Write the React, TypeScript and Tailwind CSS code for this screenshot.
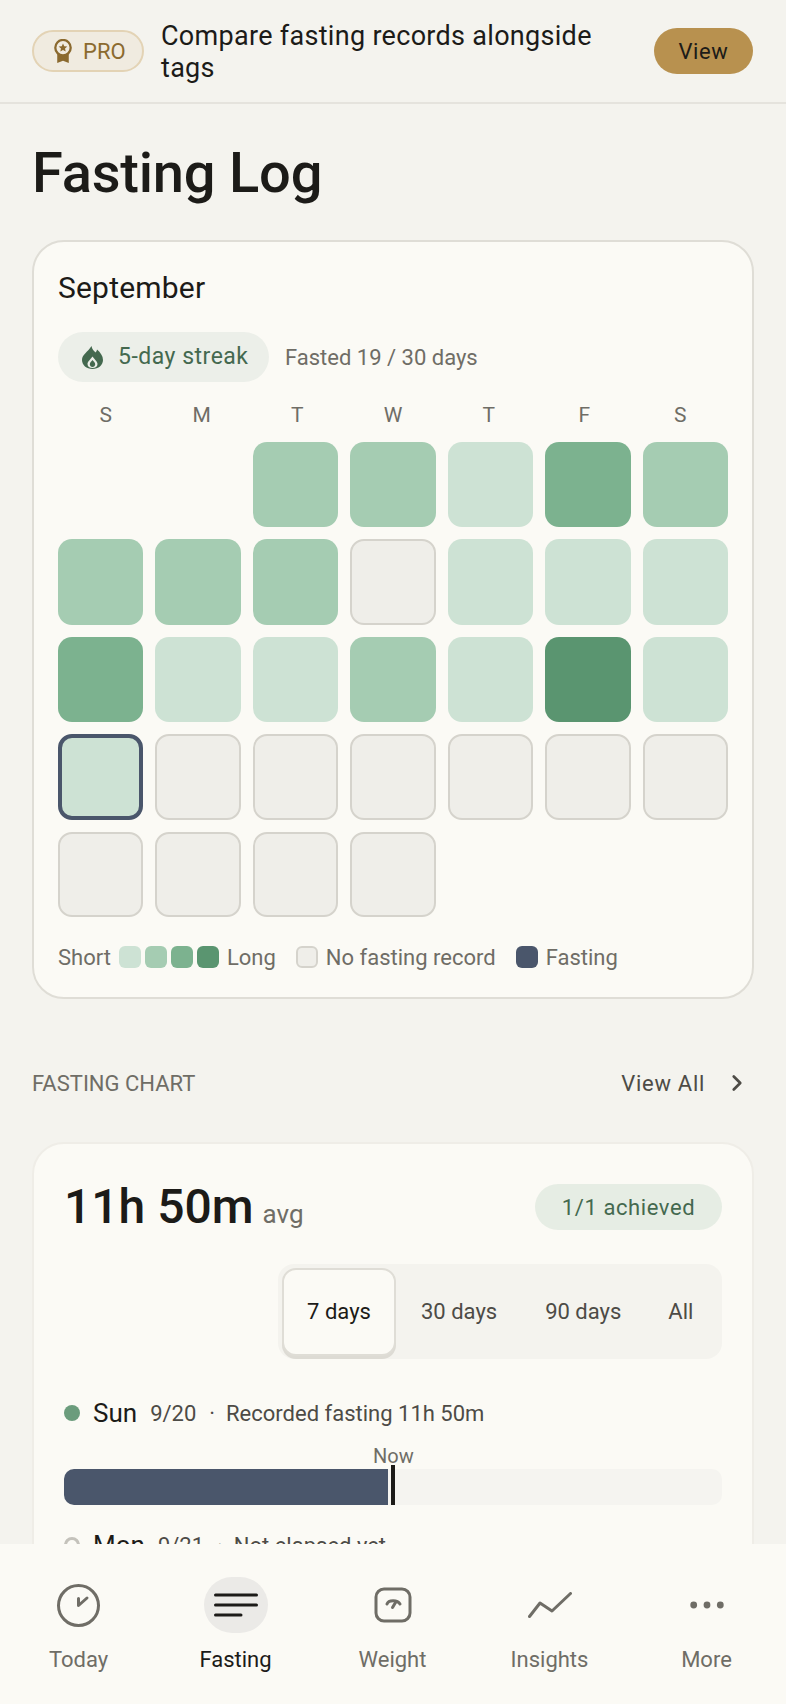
import { ChevronRight } from "lucide-react";

const WEEKDAYS = ["S", "M", "T", "W", "T", "F", "S"];

// -1 blank, 0 no record, 1-4 fasting length, 5 today
const DAYS = [
  -1, -1, 2, 2, 1, 3, 2,
  2, 2, 2, 0, 1, 1, 1,
  3, 1, 1, 2, 1, 4, 1,
  5, 0, 0, 0, 0, 0, 0,
  0, 0, 0, 0,
];

const CELL_STYLES: Record<number, string> = {
  [-1]: "",
  0: "bg-[#efeee9] border-2 border-[#d5d3cc]",
  1: "bg-[#cde2d4]",
  2: "bg-[#a5ccb2]",
  3: "bg-[#7cb28f]",
  4: "bg-[#5a9570]",
  5: "bg-[#cde2d4] border-4 border-[#4a566b]",
};

function ProBadge() {
  return (
    <div className="flex h-[42px] w-[112px] shrink-0 items-center gap-[10px] rounded-full border-2 border-[#e3d3b5] bg-[#f0ebe0] pl-[19px]">
      <svg width="20" height="25" viewBox="0 0 20 26" fill="none">
        <path d="M4 14 L4 25 L10 22.5 L16 25 L16 14 Z" fill="#8b6a2f" />
        <circle cx="10" cy="9" r="8" fill="#f0ebe0" stroke="#8b6a2f" strokeWidth="2.4" />
        <path
          d="M10 4.6 L11.3 7.6 L14.5 7.9 L12.1 10 L12.8 13.1 L10 11.5 L7.2 13.1 L7.9 10 L5.5 7.9 L8.7 7.6 Z"
          fill="#8b6a2f"
        />
      </svg>
      <span className="text-[22px] font-[450] text-[#8b6a2f]">PRO</span>
    </div>
  );
}

function Flame() {
  return (
    <svg width="21" height="23" viewBox="0 0 21 23">
      <path
        fillRule="evenodd"
        d="M9.5 0 C10 3.5 12 5 13.5 6.5 C14.5 5.5 15 4.5 15 3.5 C18.5 6.5 21 10 21 14 C21 19 16.5 23 10.5 23 C4.5 23 0 19 0 14 C0 8.5 6 6 9.5 0 Z M10.5 10.5 C8.5 13.5 5.5 15.5 5.5 18 C5.5 20.5 7.5 22 10.5 22 C13.5 22 15.5 20.5 15.5 18 C15.5 15.5 12.5 13.5 10.5 10.5 Z"
        fill="#44694f"
      />
      <path
        d="M10.5 14 C9.5 15.5 7.8 16.5 7.8 18.2 C7.8 19.8 9 21 10.5 21 C12 21 13.2 19.8 13.2 18.2 C13.2 16.5 11.5 15.5 10.5 14 Z"
        fill="#44694f"
      />
    </svg>
  );
}

function CalendarCard() {
  return (
    <section className="mx-[32px] rounded-[32px] border-2 border-[#dfddd6] bg-[#fbfaf5] px-[24px] pb-[27px] pt-[26px]">
      <h2 className="text-[30px] font-normal leading-[40px] tracking-[0.2px] text-[#1c1b18]">September</h2>
      <div className="mt-[24px] flex items-center gap-[16px]">
        <div className="flex h-[50px] w-[211px] items-center gap-[15px] rounded-full bg-[#ecefe9] pl-[24px]">
          <Flame />
          <span className="text-[23px] font-[450] tracking-[0.5px] text-[#44694f]">5-day streak</span>
        </div>
        <span className="text-[22px] text-[#6f6d66]">Fasted 19 / 30 days</span>
      </div>

      <div className="mt-[19px] grid grid-cols-7">
        {WEEKDAYS.map((d, i) => (
          <div key={i} className="h-[28px] text-center text-[21px] leading-[28px] text-[#6f6d66]">
            {d}
          </div>
        ))}
      </div>

      <div className="mt-[13px] grid grid-cols-7 gap-[12px]">
        {DAYS.map((level, i) => (
          <div key={i} className={`aspect-square rounded-[14px] ${CELL_STYLES[level]}`} />
        ))}
      </div>

      {/* Legend */}
      <div className="mt-[27px] flex h-[26px] items-center text-[22px] text-[#6f6d66]">
        <span>Short</span>
        <div className="ml-[8px] flex gap-[4px]">
          <div className="h-[22px] w-[22px] rounded-[6px] bg-[#cde2d4]" />
          <div className="h-[22px] w-[22px] rounded-[6px] bg-[#a5ccb2]" />
          <div className="h-[22px] w-[22px] rounded-[6px] bg-[#7cb28f]" />
          <div className="h-[22px] w-[22px] rounded-[6px] bg-[#5a9570]" />
        </div>
        <span className="ml-[8px]">Long</span>
        <div className="ml-[20px] h-[22px] w-[22px] rounded-[6px] border-2 border-[#d5d3cc] bg-[#efeee9]" />
        <span className="ml-[8px]">No fasting record</span>
        <div className="ml-[20px] h-[22px] w-[22px] rounded-[6px] bg-[#4a566b]" />
        <span className="ml-[8px]">Fasting</span>
      </div>
    </section>
  );
}

function ChartCard() {
  return (
    <section className="mx-[32px] rounded-t-[32px] border-2 border-[#efede7] bg-[#fbfaf5] px-[30px] pt-[33px]">
      <div className="flex items-center justify-between">
        <div className="flex items-baseline gap-[9px]">
          <span className="text-[48px] font-medium leading-[60px] text-[#1c1b18]">11h 50m</span>
          <span className="text-[26px] text-[#6f6d66]">avg</span>
        </div>
        <div className="flex h-[46px] w-[187px] items-center justify-center rounded-full bg-[#e6ede4] text-[22px] font-[450] tracking-[0.6px] text-[#44694f]">
          1/1 achieved
        </div>
      </div>

      <div className="mt-[27px] flex justify-end">
        <div className="flex h-[95px] w-[444px] items-center rounded-[16px] bg-[#f4f3ee] pl-[4px] text-[22px] text-[#4d4b46]">
          <div className="flex h-[88px] w-[114px] items-center justify-center rounded-[14px] border-2 border-[#dfddd6] bg-[#fbfaf5] text-[#1c1b18] shadow-[0_3px_0_#dddbd4]">
            7 days
          </div>
          <span className="ml-[25px]">30 days</span>
          <span className="ml-[48px]">90 days</span>
          <span className="ml-[47px]">All</span>
        </div>
      </div>

      <div className="mt-[38px] flex h-[32px] items-center">
        <div className="h-[16px] w-[16px] rounded-full bg-[#6b9c7c]" />
        <span className="ml-[13px] text-[26px] font-[450] text-[#1c1b18]">Sun</span>
        <span className="ml-[13px] text-[22px] text-[#4d4b46]">9/20</span>
        <span className="ml-[13px] text-[22px] text-[#4d4b46]">·</span>
        <span className="ml-[11px] text-[22px] text-[#4d4b46]">Recorded fasting 11h 50m</span>
      </div>

      {/* Timeline */}
      <div className="relative mt-[40px] h-[36px] rounded-[10px] bg-[#f5f4f0]">
        <div className="h-full w-[324px] rounded-l-[10px] bg-[#4a566b]" />
        <div className="absolute bottom-0 left-[327px] top-[-4px] w-[4px] bg-[#1c1b18]" />
        <span className="absolute left-[309px] top-[-25px] text-[20px] leading-[24px] text-[#6f6d66]">Now</span>
      </div>

      <div className="mt-[24px] flex h-[32px] items-center">
        <div className="h-[16px] w-[16px] rounded-full border-[3px] border-[#c4c2bb]" />
        <span className="ml-[13px] text-[26px] font-[450] text-[#1c1b18]">Mon</span>
        <span className="ml-[13px] text-[22px] text-[#4d4b46]">9/21</span>
        <span className="ml-[13px] text-[22px] text-[#4d4b46]">·</span>
        <span className="ml-[11px] text-[22px] text-[#4d4b46]">Not elapsed yet</span>
      </div>
    </section>
  );
}

function NavItem({ label, active, children }: { label: string; active?: boolean; children: React.ReactNode }) {
  return (
    <div className="flex w-[157px] flex-col items-center">
      <div className={`flex h-[56px] w-[64px] items-center justify-center rounded-full ${active ? "bg-[#ebeae7]" : ""}`}>
        {children}
      </div>
      <span className={`mt-[12px] text-[22px] leading-[30px] ${active ? "font-[450] text-[#1c1b18]" : "text-[#6f6d66]"}`}>
        {label}
      </span>
    </div>
  );
}

export default function App() {
  return (
    <div className="flex h-[1704px] w-[786px] flex-col overflow-hidden bg-[#f4f3ee] font-['Roboto',sans-serif]">
      {/* Promo banner */}
      <header className="flex h-[104px] shrink-0 items-center border-b-2 border-[#e5e3dd] pl-[32px] pr-[33px]">
        <ProBadge />
        <p className="ml-[17px] w-[460px] pt-[1px] text-[27px] leading-[32px] tracking-[0.3px] text-[#1c1b18]">
          Compare fasting records alongside tags
        </p>
        <button className="ml-auto h-[46px] w-[99px] rounded-[23px] bg-[#b8914f] text-[22px] font-[450] tracking-[0.6px] text-[#1c1b18]">
          View
        </button>
      </header>

      <main className="min-h-0 flex-1 overflow-hidden">
        <h1 className="ml-[32px] mt-[34px] text-[56px] font-medium leading-[70px] tracking-[-0.2px] text-[#1c1b18]">
          Fasting Log
        </h1>
        <div className="mt-[32px]">
          <CalendarCard />
        </div>
        <div className="ml-[32px] mr-[33px] mt-[69px] flex h-[30px] items-center justify-between">
          <span className="text-[22px] uppercase text-[#6f6d66]">Fasting chart</span>
          <div className="flex items-center text-[22px] font-[450] tracking-[0.7px] text-[#4d4b46]">
            View All
            <ChevronRight className="ml-[19px] mr-[3px]" size={26} strokeWidth={2.5} />
          </div>
        </div>
        <div className="mt-[44px]">
          <ChartCard />
        </div>
      </main>

      {/* Bottom tab bar */}
      <nav className="flex h-[160px] shrink-0 bg-[#fbfaf5] pt-[33px]">
        <NavItem label="Today">
          <svg width="43" height="43" viewBox="0 0 43 43" fill="none" stroke="#6f6d66" strokeWidth="3" strokeLinecap="round">
            <circle cx="21.5" cy="21.5" r="20" />
            <path d="M30 14 L21.5 21.5 L21.5 14.5" strokeLinejoin="round" />
          </svg>
        </NavItem>
        <NavItem label="Fasting" active>
          <svg width="44" height="24" viewBox="0 0 44 24" fill="none" stroke="#1c1b18" strokeWidth="3" strokeLinecap="round">
            <path d="M1.5 2 H42.5" />
            <path d="M1.5 12 H42.5" />
            <path d="M1.5 22 H27" />
          </svg>
        </NavItem>
        <NavItem label="Weight">
          <svg width="38" height="36" viewBox="0 0 38 36" fill="none" stroke="#6f6d66" strokeWidth="3" strokeLinecap="round">
            <rect x="2" y="2" width="34" height="32" rx="8" />
            <path d="M13 17 C14.5 12.5 23.5 12.5 26 17" />
            <path d="M21.5 15.5 L18.5 20.5" />
          </svg>
        </NavItem>
        <NavItem label="Insights">
          <svg width="44" height="26" viewBox="0 0 44 26" fill="none" stroke="#6f6d66" strokeWidth="3" strokeLinecap="round" strokeLinejoin="round">
            <path d="M1.5 24.5 L12 11 L24 19 L42.5 1.5" />
          </svg>
        </NavItem>
        <NavItem label="More">
          <svg width="34" height="8" viewBox="0 0 34 8" fill="#6f6d66">
            <circle cx="3.7" cy="4" r="3.4" />
            <circle cx="17" cy="4" r="3.4" />
            <circle cx="30.3" cy="4" r="3.4" />
          </svg>
        </NavItem>
      </nav>
    </div>
  );
}
